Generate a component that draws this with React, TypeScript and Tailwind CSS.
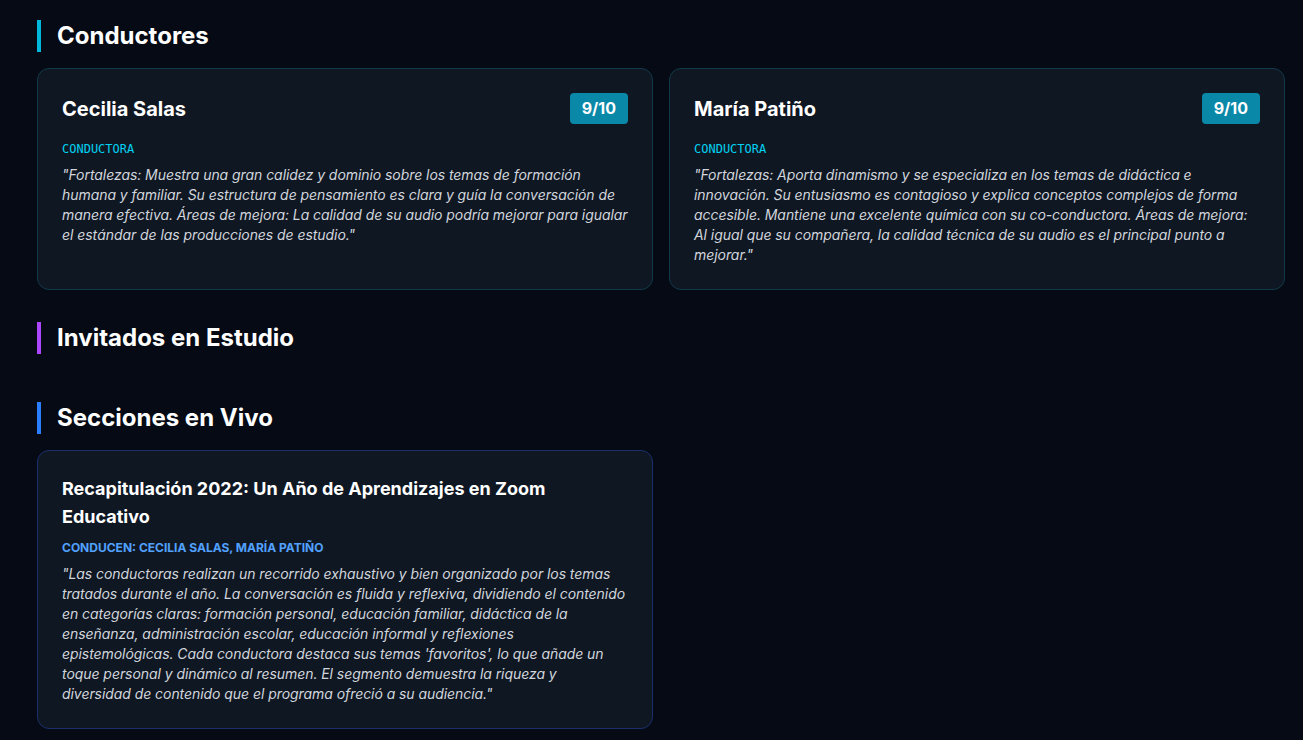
const hosts = [
  {
    name: "Cecilia Salas",
    score: "9/10",
    role: "Conductora",
    text: '"Fortalezas: Muestra una gran calidez y dominio sobre los temas de formación humana y familiar. Su estructura de pensamiento es clara y guía la conversación de manera efectiva. Áreas de mejora: La calidad de su audio podría mejorar para igualar el estándar de las producciones de estudio."',
  },
  {
    name: "María Patiño",
    score: "9/10",
    role: "Conductora",
    text: '"Fortalezas: Aporta dinamismo y se especializa en los temas de didáctica e innovación. Su entusiasmo es contagioso y explica conceptos complejos de forma accesible. Mantiene una excelente química con su co-conductora. Áreas de mejora: Al igual que su compañera, la calidad técnica de su audio es el principal punto a mejorar."',
  },
];

const segments = [
  {
    title: "Recapitulación 2022: Un Año de Aprendizajes en Zoom Educativo",
    hosts: "Conducen: Cecilia Salas, María Patiño",
    text: "\"Las conductoras realizan un recorrido exhaustivo y bien organizado por los temas tratados durante el año. La conversación es fluida y reflexiva, dividiendo el contenido en categorías claras: formación personal, educación familiar, didáctica de la enseñanza, administración escolar, educación informal y reflexiones epistemológicas. Cada conductora destaca sus temas 'favoritos', lo que añade un toque personal y dinámico al resumen. El segmento demuestra la riqueza y diversidad de contenido que el programa ofreció a su audiencia.\"",
  },
];

function SectionTitle({ children, bar }: { children: React.ReactNode; bar: string }) {
  return (
    <h2 className={`mb-4 border-l-4 pl-4 text-2xl font-bold leading-8 text-white ${bar}`}>{children}</h2>
  );
}

export default function App() {
  return (
    <div
      className="min-h-screen bg-[#050a14] pt-5 pl-[37px] pr-[18px] pb-10"
      style={{ fontFamily: "Inter, 'Noto Sans', sans-serif" }}
    >
      <section className="mb-8">
        <SectionTitle bar="border-cyan-500">Conductores</SectionTitle>
        <div className="grid grid-cols-2 gap-4">
          {hosts.map((h) => (
            <div key={h.name} className="rounded-xl border border-[#12394a] bg-[#0f1723] p-6">
              <div className="mb-[17px] flex items-center justify-between">
                <h3 className="text-xl font-bold leading-7 text-white">{h.name}</h3>
                <span className="rounded bg-[#0a88a8] px-3 py-1 text-base font-bold leading-[23px] text-white">
                  {h.score}
                </span>
              </div>
              <div className="mb-2 font-['DejaVu_Sans_Mono',monospace] text-xs leading-4 uppercase text-cyan-400">
                {h.role}
              </div>
              <p className="text-sm italic leading-5 tracking-[-0.06px] text-gray-300">{h.text}</p>
            </div>
          ))}
        </div>
      </section>

      <section className="mb-8">
        <SectionTitle bar="border-purple-500">Invitados en Estudio</SectionTitle>
        <div className="grid grid-cols-2 gap-4"></div>
      </section>

      <section className="mb-8">
        <SectionTitle bar="border-blue-500">Secciones en Vivo</SectionTitle>
        <div className="grid grid-cols-2 gap-4">
          {segments.map((s) => (
            <div key={s.title} className="rounded-xl border border-[#1b2f6e] bg-[#0f1723] p-6">
              <h3 className="mb-[9px] text-lg font-bold leading-7 text-white">{s.title}</h3>
              <div className="mb-2 text-xs font-bold leading-4 uppercase text-blue-400">{s.hosts}</div>
              <p className="text-sm italic leading-5 tracking-[-0.06px] text-gray-300">{s.text}</p>
            </div>
          ))}
        </div>
      </section>
    </div>
  );
}
